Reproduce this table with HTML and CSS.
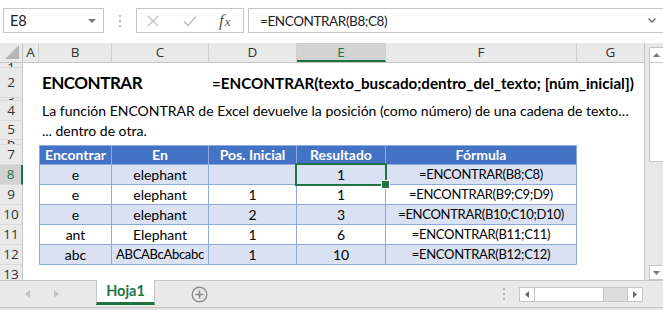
FILE: index.html
```html
<!DOCTYPE html>
<html lang="es">
<head>
<meta charset="utf-8">
<title>ENCONTRAR</title>
<link rel="stylesheet" href="styles.css">
</head>
<body>
<div class="app">
  <div class="fbar">
    <div class="namebox"><span class="nb-text">E8</span><span class="nb-arrow"></span></div>
    <div class="grip"><i></i><i></i><i></i></div>
    <div class="fxbox">
      <svg class="ic ic-x" width="12" height="12" viewBox="0 0 12 12"><path d="M1 1 L11 11 M11 1 L1 11" stroke="#c3c3c3" stroke-width="1.4" fill="none"/></svg>
      <svg class="ic ic-ok" width="14" height="12" viewBox="0 0 14 12"><path d="M1 6.5 L5 10.5 L13 1.5" stroke="#c3c3c3" stroke-width="1.6" fill="none"/></svg>
      <span class="fx"><span class="fx-f">f</span><span class="fx-x">x</span></span>
    </div>
    <div class="finput"><span class="ftext">=ENCONTRAR(B8;C8)</span><svg class="chev" width="8" height="5" viewBox="0 0 8 5"><path d="M0.5 0.5 L4 4 L7.5 0.5" stroke="#666" stroke-width="1.3" fill="none"/></svg></div>
  </div>

  <div class="main">
    <div class="sheet">
      <div class="colhead">
        <div class="corner"><svg width="14" height="14" viewBox="0 0 14 14"><polygon points="14,0 14,14 0,14" fill="#b5b5b5"/></svg></div>
        <div class="ch wa">A</div>
        <div class="ch wb">B</div>
        <div class="ch wc">C</div>
        <div class="ch wd">D</div>
        <div class="ch we ch-sel">E</div>
        <div class="ch wf">F</div>
        <div class="ch wg">G</div>
      </div>

      <div class="r h5"><div class="rh rh-top">1</div><div class="rc"></div></div>
      <div class="r h29"><div class="rh">2</div>
        <div class="rc rc-title"><span class="title">ENCONTRAR</span><span class="syntax">=ENCONTRAR(texto_buscado;dentro_del_texto; [núm_inicial])</span></div>
      </div>
      <div class="r h3"><div class="rh">3</div><div class="rc"></div></div>
      <div class="r h20"><div class="rh">4</div><div class="rc rc-text">La función ENCONTRAR de Excel devuelve la posición (como número) de una cadena de texto…</div></div>
      <div class="r h19"><div class="rh">5</div><div class="rc rc-text">... dentro de otra.</div></div>
      <div class="r h5"><div class="rh">6</div><div class="rc"></div></div>

      <div class="r h20"><div class="rh">7</div>
        <div class="rc"><div class="gap-a"></div>
          <div class="t th wb first">Encontrar</div>
          <div class="t th wc">En</div>
          <div class="t th wd">Pos. Inicial</div>
          <div class="t th we">Resultado</div>
          <div class="t th wf">Fórmula</div>
        </div>
      </div>
      <div class="r h20"><div class="rh rh-sel">8</div>
        <div class="rc"><div class="gap-a"></div>
          <div class="t band wb first">e</div>
          <div class="t band wc">elephant</div>
          <div class="t band wd"></div>
          <div class="t band we sel">1</div>
          <div class="t band wf cap">=ENCONTRAR(B8;C8)</div>
        </div>
      </div>
      <div class="r h20"><div class="rh">9</div>
        <div class="rc"><div class="gap-a"></div>
          <div class="t wb first">e</div>
          <div class="t wc">elephant</div>
          <div class="t wd">1</div>
          <div class="t we">1</div>
          <div class="t wf cap">=ENCONTRAR(B9;C9;D9)</div>
        </div>
      </div>
      <div class="r h20"><div class="rh">10</div>
        <div class="rc"><div class="gap-a"></div>
          <div class="t band wb first">e</div>
          <div class="t band wc">elephant</div>
          <div class="t band wd">2</div>
          <div class="t band we">3</div>
          <div class="t band wf cap">=ENCONTRAR(B10;C10;D10)</div>
        </div>
      </div>
      <div class="r h20"><div class="rh">11</div>
        <div class="rc"><div class="gap-a"></div>
          <div class="t wb first">ant</div>
          <div class="t wc">Elephant</div>
          <div class="t wd">1</div>
          <div class="t we">6</div>
          <div class="t wf cap">=ENCONTRAR(B11;C11)</div>
        </div>
      </div>
      <div class="r h20"><div class="rh">12</div>
        <div class="rc"><div class="gap-a"></div>
          <div class="t band wb first">abc</div>
          <div class="t band wc cap">ABCABcAbcabc</div>
          <div class="t band wd">1</div>
          <div class="t band we">10</div>
          <div class="t band wf cap">=ENCONTRAR(B12;C12)</div>
        </div>
      </div>
      <div class="r h16"><div class="rh rh-top">13</div><div class="rc"></div></div>
    </div>

    <div class="vscroll">
      <div class="vbtn vup"><svg width="7" height="4" viewBox="0 0 7 4"><polygon points="0,4 7,4 3.5,0" fill="#777"/></svg></div>
      <div class="vthumb"></div>
      <div class="vtrack"></div>
      <div class="vbtn vdown"><svg width="7" height="4" viewBox="0 0 7 4"><polygon points="0,0 7,0 3.5,4" fill="#777"/></svg></div>
    </div>
  </div>

  <div class="tabbar">
    <svg class="nav nav-l" width="5" height="8" viewBox="0 0 5 8"><polygon points="5,0 5,8 0,4" fill="#c4c4c4"/></svg>
    <svg class="nav nav-r" width="5" height="8" viewBox="0 0 5 8"><polygon points="0,0 0,8 5,4" fill="#c4c4c4"/></svg>
    <div class="tab">Hoja1</div>
    <svg class="plus" width="17" height="17" viewBox="0 0 17 17"><circle cx="8.5" cy="8.5" r="7.3" stroke="#8c8c8c" stroke-width="1.4" fill="none"/><path d="M8.5 4.5 V12.5 M4.5 8.5 H12.5" stroke="#8c8c8c" stroke-width="1.6"/></svg>
    <div class="hgrip"><i></i><i></i><i></i></div>
    <div class="hscroll">
      <div class="hbtn"><svg width="4" height="7" viewBox="0 0 4 7"><polygon points="4,0 4,7 0,3.5" fill="#666"/></svg></div>
      <div class="hthumb"></div>
      <div class="htrack"></div>
      <div class="hbtn hbtn-r"><svg width="4" height="7" viewBox="0 0 4 7"><polygon points="0,0 0,7 4,3.5" fill="#666"/></svg></div>
    </div>
  </div>
  <div class="status"></div>
</div>
</body>
</html>
```

FILE: styles.css
```css
* { box-sizing: border-box; }
html, body { margin: 0; padding: 0; }
body {
  width: 663px;
  height: 310px;
  overflow: hidden;
  background: #fff;
  font-family: Lato, "Liberation Sans", sans-serif;
  color: #000;
}
.app { width: 663px; height: 310px; display: flex; flex-direction: column; }

/* formula bar */
.fbar { height: 43px; display: flex; align-items: flex-start; padding-top: 8px; flex: none; }
.namebox {
  margin-left: 3px; width: 101px; height: 25px;
  border: 1px solid #c6c6c6;
  display: flex; align-items: center; justify-content: space-between;
  padding: 0 7px 0 6px;
  font-size: 14.5px; color: #222;
}
.nb-arrow { width: 0; height: 0; border-left: 4px solid transparent; border-right: 4px solid transparent; border-top: 4px solid #777; }
.grip { width: 32px; height: 25px; display: flex; flex-direction: column; align-items: center; justify-content: center; gap: 3px; }
.grip i, .hgrip i { display: block; width: 2px; height: 2px; background: #b5b5b5; }
.fxbox {
  width: 108px; height: 25px; border: 1px solid #c6c6c6;
  display: flex; align-items: center; padding-left: 10px;
}
.ic-x { margin-right: 24px; }
.ic-ok { margin-right: 22px; }
.fx { font-family: "Liberation Serif", serif; font-style: italic; color: #555; display: flex; align-items: baseline; }
.fx-f { font-size: 17px; }
.fx-x { font-size: 13px; margin-left: 1px; }
.finput {
  margin-left: 4px; flex: 1; height: 25px; border: 1px solid #c6c6c6; border-right: none;
  display: flex; align-items: center; justify-content: space-between;
  padding: 0 7px 0 11px; color: #222;
}
.ftext { font-size: 13.5px; letter-spacing: -0.4px; }

/* main area */
.main { height: 237px; display: flex; flex: none; }
.sheet { width: 645px; display: flex; flex-direction: column; border-right: 1px solid #c6c6c6; }
.colhead { height: 20px; display: flex; background: #e9e9e9; border-bottom: 1px solid #c6c6c6; flex: none; }
.corner { width: 23px; border-right: 1px solid #c6c6c6; display: flex; align-items: flex-end; justify-content: flex-end; padding: 0 3px 3px 0; }
.ch {
  border-right: 1px solid #d0d0d0;
  text-align: center; font-family: "Open Sans", sans-serif; font-size: 13.5px; line-height: 19px; color: #333;
}
.ch-sel { background: #d3d3d3; color: #217346; border-bottom: 2px solid #217346; }
.wa { width: 16px; flex: none; }
.wb { width: 73px; flex: none; }
.wc { width: 97px; flex: none; }
.wd { width: 88px; flex: none; }
.we { width: 89px; flex: none; }
.wf { width: 191px; flex: none; }
.wg { width: 67px; flex: none; border-right: none; }

.r { display: flex; flex: none; }
.h3 { height: 3px; } .h5 { height: 5px; } .h16 { height: 16px; }
.h19 { height: 19px; } .h20 { height: 20px; } .h29 { height: 30px; }
.rh {
  width: 23px; flex: none; overflow: hidden;
  background: #e9e9e9; border-right: 1px solid #c6c6c6; border-bottom: 1px solid #dadada;
  display: flex; align-items: center; justify-content: center; padding-bottom: 2px;
  font-family: "Open Sans", sans-serif; font-size: 13.5px; color: #333;
}
.h3 .rh, .h5 .rh { padding-bottom: 0; }
.rh-top { align-items: flex-start; line-height: 18px; }
.h5 .rh-top { line-height: 8px; }
.rh-sel { background: #d3d3d3; color: #217346; border-right: 2px solid #217346; }
.rc { flex: 1; display: flex; align-items: center; min-width: 0; }
.rc-title { padding-left: 19px; align-items: center; padding-bottom: 1px; }
.title { width: 170px; flex: none; font-weight: 700; font-size: 17px; letter-spacing: -0.5px; }
.syntax { font-weight: 700; font-size: 15.2px; white-space: nowrap; }
.rc-text { padding-left: 19px; font-size: 14px; white-space: nowrap; padding-bottom: 1px; }
.gap-a { width: 16px; flex: none; }

/* table */
.t {
  height: 20px; border-right: 1px solid #8ea9db; border-bottom: 1px solid #8ea9db;
  text-align: center; font-size: 14px; line-height: 19px; white-space: nowrap; overflow: hidden;
}
.t.cap { font-size: 13px; letter-spacing: -0.3px; }
.t.first { border-left: 1px solid #8ea9db; }
.th { background: #4472c4; color: #fff; font-weight: 700; border-top: 1px solid #8ea9db; line-height: 18px; }
.band { background: #d9e1f2; }
.sel { position: relative; overflow: visible; }
.sel::after {
  content: ""; position: absolute; left: -2px; top: -2px; right: -2px; bottom: -2px;
  border: 2px solid #217346;
}
.sel::before {
  content: ""; position: absolute; right: -5px; bottom: -5px; width: 7px; height: 7px;
  background: #217346; border: 1px solid #fff; z-index: 2;
}

/* vertical scrollbar */
.vscroll { width: 18px; background: #e8e8e8; display: flex; flex-direction: column; padding: 4px 0 0 4px; }
.vbtn { background: #fff; border: 1px solid #c6c6c6; border-right: none; display: flex; align-items: center; justify-content: center; flex: none; }
.vup { height: 16px; }
.vdown { height: 15px; }
.vthumb { height: 99px; background: #fff; border: 1px solid #c6c6c6; border-top: none; border-right: none; flex: none; }
.vtrack { flex: 1; }

/* sheet tabs */
.tabbar {
  height: 27px; flex: none; background: #e9e9e9; border-top: 1px solid #c6c6c6;
  display: flex; align-items: center;
}
.nav-l { margin-left: 25px; }
.nav-r { margin-left: 24px; }
.tab {
  margin-left: 37px; align-self: flex-start; margin-top: -1px;
  width: 59px; height: 25px; background: #fff;
  border-left: 1px solid #c6c6c6; border-right: 1px solid #c6c6c6; border-bottom: 3px solid #217346;
  text-align: center; font-weight: 700; font-size: 14.5px; color: #217346; line-height: 22px;
}
.plus { margin-left: 36px; }
.hgrip { margin-left: 295px; display: flex; flex-direction: column; gap: 3px; }
.hscroll { margin-left: 14px; width: 124px; height: 15px; display: flex; border: 1px solid #c6c6c6; background: #dcdcdc; }
.hbtn { width: 15px; background: #fff; display: flex; align-items: center; justify-content: center; border-right: 1px solid #c6c6c6; }
.hbtn-r { border-right: none; border-left: 1px solid #c6c6c6; }
.hthumb { width: 69px; background: #fff; border-right: 1px solid #c6c6c6; }
.htrack { flex: 1; }
.status { flex: 1; background: #e2e2e2; border-top: 1px solid #c6c6c6; }
```
